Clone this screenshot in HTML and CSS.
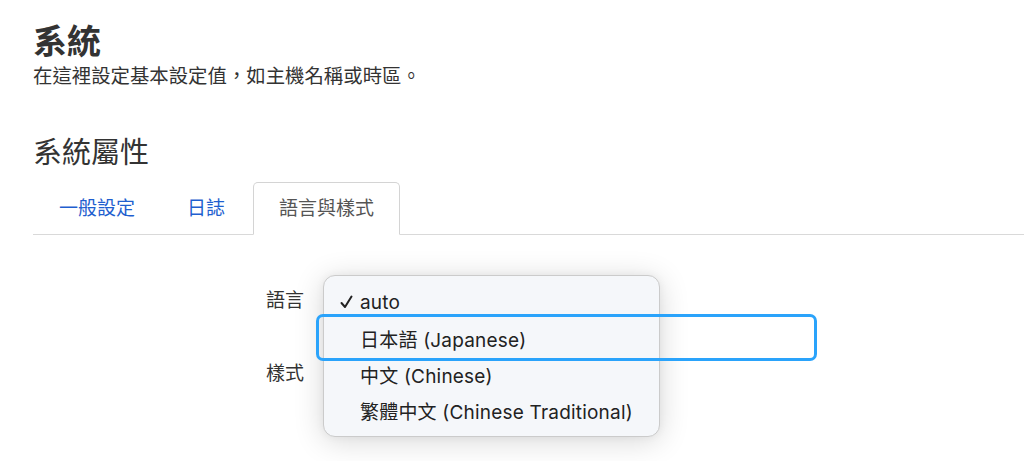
FILE: index.html
```html
<!DOCTYPE html>
<html lang="zh-Hant">
<head>
  <meta charset="UTF-8" />
  <meta name="viewport" content="width=device-width, initial-scale=1.0" />
  <title>系統</title>
  <link rel="stylesheet" href="styles.css">
</head>
<body>
  <div class="page">
    <h1>系統</h1>
    <p class="subtitle">在這裡設定基本設定值，如主機名稱或時區。</p>

    <h2>系統屬性</h2>

    <!-- tabs -->
    <ul class="tabs">
      <li><a href="#">一般設定</a></li>
      <li><a href="#">日誌</a></li>
      <li class="active"><a href="#">語言與樣式</a></li>
    </ul>

    <!-- language & style form -->
    <div class="form">
      <label>語言</label>
      <div class="field"></div>
      <label>樣式</label>
      <div class="field"></div>

      <!-- open select popup -->
      <ul class="menu">
        <li class="checked">
          <span class="check">
            <svg width="13" height="14" viewBox="0 0 13 14"><polyline points="1.5,8 5,12 11.5,1.5" fill="none" stroke="#222" stroke-width="2" stroke-linecap="round" stroke-linejoin="round"/></svg>
          </span>auto
        </li>
        <li><span class="check"></span>日本語 (Japanese)</li>
        <li><span class="check"></span>中文 (Chinese)</li>
        <li><span class="check"></span>繁體中文 (Chinese Traditional)</li>
      </ul>

      <div class="highlight"></div>
    </div>
  </div>
</body>
</html>
```

FILE: styles.css
```css
body {
  margin: 0;
  padding: 0;
  min-height: 100vh;
  background-color: #fff;
  color: #333;
  font-family: 'Noto Sans CJK TC', sans-serif;
}

.page {
  padding: 20px 0 80px 33px;
}

h1 {
  margin: 0;
  font-size: 34px;
  line-height: 40px;
  font-weight: bold;
  color: #333;
}

.subtitle {
  margin: 1px 0 0;
  font-size: 19.4px;
  line-height: 28px;
  color: #333;
}

h2 {
  margin: 41px 0 0;
  font-size: 29px;
  line-height: 40px;
  font-weight: normal;
  color: #333;
}

.tabs {
  list-style: none;
  margin: 12px 0 0;
  padding: 0;
  display: flex;
  border-bottom: 1px solid #d9d9d9;
}

.tabs li {
  margin-bottom: -1px;
}

.tabs a {
  display: block;
  padding: 11px 25px 14px;
  font-size: 19px;
  line-height: 26px;
  color: #1f5fcf;
  text-decoration: none;
  border: 1px solid transparent;
  border-radius: 5px 5px 0 0;
}

.tabs li:nth-child(2) a {
  padding-right: 27px;
}

.tabs .active a {
  color: #555;
  border-color: #d4d4d4;
  border-bottom-color: #fff;
  background: #fff;
}

.form {
  position: relative;
  display: grid;
  grid-template-columns: 271px 337px;
  grid-auto-rows: 36px;
  column-gap: 19px;
  row-gap: 37px;
  margin-top: 46px;
}

.form label {
  text-align: right;
  font-size: 19px;
  line-height: 36px;
  color: #333;
}

.field {
  border-radius: 6px;
}

.menu {
  position: absolute;
  left: 290px;
  top: -6px;
  width: 335px;
  margin: 0;
  padding: 8px 0;
  list-style: none;
  background: #f5f7fa;
  border: 1px solid #cbcbcb;
  border-radius: 12px;
  box-shadow: 0 4px 30px rgba(0, 0, 0, 0.16), 0 0 8px rgba(0, 0, 0, 0.05);
  font-family: 'Inter', 'Noto Sans CJK TC', sans-serif;
}

.menu li {
  display: flex;
  align-items: center;
  height: 36px;
  padding-left: 16px;
  font-size: 19px;
  letter-spacing: 0.2px;
  color: #222;
}

.menu .check {
  width: 20px;
  flex-shrink: 0;
  display: flex;
  align-items: center;
}

.highlight {
  position: absolute;
  left: 283px;
  top: 33px;
  width: 495px;
  height: 41px;
  border: 3px solid #2aa3fb;
  border-radius: 7px;
}
```
